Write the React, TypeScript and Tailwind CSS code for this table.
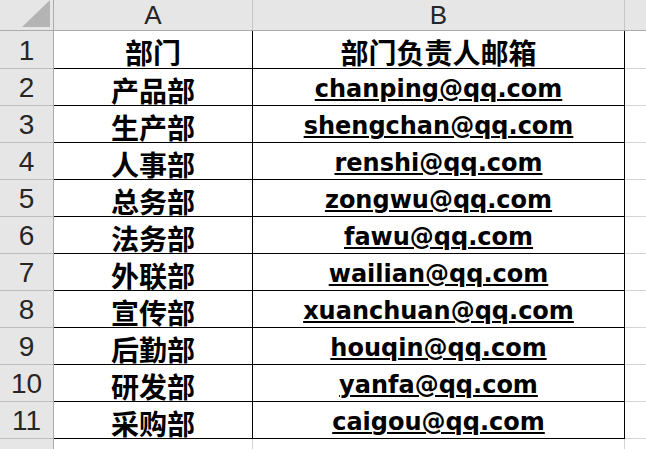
import React from "react";

// Sheet data: department name + contact mailbox
const ROWS: { dept: string; mail: string; title?: boolean }[] = [
  { dept: "部门", mail: "部门负责人邮箱", title: true },
  { dept: "产品部", mail: "chanping@qq.com" },
  { dept: "生产部", mail: "shengchan@qq.com" },
  { dept: "人事部", mail: "renshi@qq.com" },
  { dept: "总务部", mail: "zongwu@qq.com" },
  { dept: "法务部", mail: "fawu@qq.com" },
  { dept: "外联部", mail: "wailian@qq.com" },
  { dept: "宣传部", mail: "xuanchuan@qq.com" },
  { dept: "后勤部", mail: "houqin@qq.com" },
  { dept: "研发部", mail: "yanfa@qq.com" },
  { dept: "采购部", mail: "caigou@qq.com" },
];

const cjk = "font-['Noto_Sans_CJK_SC','Noto_Sans',sans-serif] font-bold text-[28px] leading-none text-black";
const latin = "font-['DejaVu_Sans','Liberation_Sans',sans-serif] font-bold text-[24px] leading-none text-black underline decoration-2 underline-offset-[2px]";
const headText = "font-['Liberation_Sans',Arial,sans-serif] text-[#262626] leading-none";

const App: React.FC = () => {
  return (
    <div className="w-[646px] h-[449px] overflow-hidden bg-white flex flex-col select-none">
      {/* Column header strip */}
      <div className="flex h-[31px] shrink-0 bg-[#e6e6e6] border-b border-[#ababab]">
        <div className="w-[54px] shrink-0 border-r border-[#ababab] flex items-end justify-end pr-[3px] pb-[3px]">
          <svg width="28" height="27" viewBox="0 0 28 27">
            <polygon points="28,0 28,27 0,27" fill="#b4b4b4" />
          </svg>
        </div>
        <div className={`w-[199px] shrink-0 border-r border-[#c6c6c6] flex items-center justify-center text-[26px] ${headText}`}>
          A
        </div>
        <div className={`w-[372px] shrink-0 border-r border-[#c6c6c6] flex items-center justify-center text-[26px] ${headText}`}>
          B
        </div>
        <div className="flex-1" />
      </div>

      {/* Data rows */}
      {ROWS.map((row, idx) => (
        <div key={idx} className={`flex shrink-0 ${idx === 0 ? "h-[38px]" : "h-[37px]"}`}>
          <div className={`w-[54px] shrink-0 bg-[#e6e6e6] border-r border-b border-r-[#ababab] border-b-[#bcbcbc] flex items-center justify-center pt-[2px] text-[28px] ${headText}`}>
            {idx + 1}
          </div>
          <div className="w-[199px] shrink-0 border-r border-b border-black flex items-center justify-center pt-[5px]">
            <span className={cjk}>{row.dept}</span>
          </div>
          <div className="w-[372px] shrink-0 border-r border-b border-black flex items-center justify-center pt-[4px]">
            <span className={row.title ? cjk : latin}>{row.mail}</span>
          </div>
          <div className="flex-1 border-b border-[#d4d4d4]" />
        </div>
      ))}

      {/* Partial row 12 */}
      <div className="flex flex-1">
        <div className="w-[54px] shrink-0 bg-[#e6e6e6] border-r border-[#ababab]" />
        <div className="w-[199px] shrink-0 border-r border-[#d4d4d4]" />
        <div className="w-[372px] shrink-0 border-r border-[#d4d4d4]" />
        <div className="flex-1" />
      </div>
    </div>
  );
};

export default App;
